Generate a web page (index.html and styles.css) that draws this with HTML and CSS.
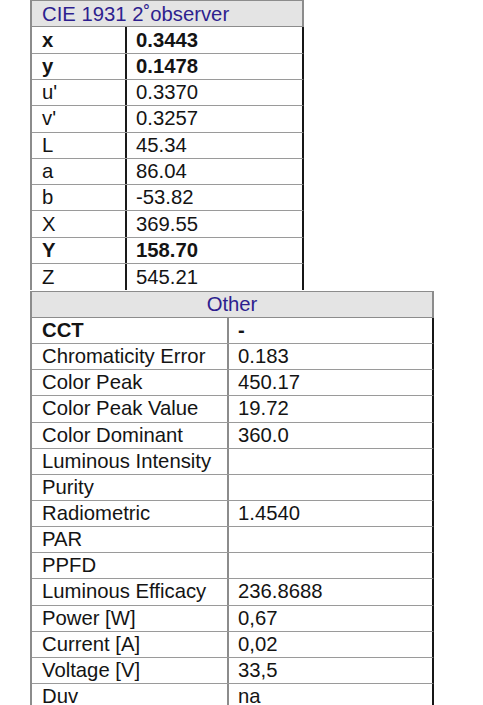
FILE: index.html
```html
<!DOCTYPE html>
<html>
<head>
<meta charset="utf-8">
<link rel="stylesheet" href="styles.css">
</head>
<body>
<div class="page">
  <div class="tbl cie">
    <div class="head left">CIE 1931 2˚observer</div>
    <div class="row"><div class="k b">x</div><div class="v b">0.3443</div></div>
    <div class="row"><div class="k b">y</div><div class="v b">0.1478</div></div>
    <div class="row"><div class="k">u'</div><div class="v">0.3370</div></div>
    <div class="row"><div class="k">v'</div><div class="v">0.3257</div></div>
    <div class="row"><div class="k">L</div><div class="v">45.34</div></div>
    <div class="row"><div class="k">a</div><div class="v">86.04</div></div>
    <div class="row"><div class="k">b</div><div class="v">-53.82</div></div>
    <div class="row"><div class="k">X</div><div class="v">369.55</div></div>
    <div class="row"><div class="k b">Y</div><div class="v b">158.70</div></div>
    <div class="row last"><div class="k">Z</div><div class="v">545.21</div></div>
  </div>
  <div class="tbl other">
    <div class="head center">Other</div>
    <div class="row"><div class="k b">CCT</div><div class="v b">-</div></div>
    <div class="row"><div class="k">Chromaticity Error</div><div class="v">0.183</div></div>
    <div class="row"><div class="k">Color Peak</div><div class="v">450.17</div></div>
    <div class="row"><div class="k">Color Peak Value</div><div class="v">19.72</div></div>
    <div class="row"><div class="k">Color Dominant</div><div class="v">360.0</div></div>
    <div class="row"><div class="k">Luminous Intensity</div><div class="v"></div></div>
    <div class="row"><div class="k">Purity</div><div class="v"></div></div>
    <div class="row"><div class="k">Radiometric</div><div class="v">1.4540</div></div>
    <div class="row"><div class="k">PAR</div><div class="v"></div></div>
    <div class="row"><div class="k">PPFD</div><div class="v"></div></div>
    <div class="row"><div class="k">Luminous Efficacy</div><div class="v">236.8688</div></div>
    <div class="row"><div class="k">Power [W]</div><div class="v">0,67</div></div>
    <div class="row"><div class="k">Current [A]</div><div class="v">0,02</div></div>
    <div class="row"><div class="k">Voltage [V]</div><div class="v">33,5</div></div>
    <div class="row"><div class="k">Duv</div><div class="v">na</div></div>
  </div>
</div>
</body>
</html>
```

FILE: styles.css
```css
html, body {
  margin: 0;
  padding: 0;
  background: #ffffff;
}
body {
  font-family: "Liberation Sans", Arial, sans-serif;
  font-size: 20.3px;
  color: #141414;
  overflow: hidden;
  height: 705px;
}
.page {
  padding-left: 30px;
  display: flex;
  flex-direction: column;
}
.tbl {
  display: flex;
  flex-direction: column;
  border-left: 2px solid #8c8c8c;
}
.cie { width: 272px; }
.other { width: 402px; margin-top: 1px; }
.head {
  height: 25.4px;
  line-height: 26px;
  background: #e4e4e4;
  border-top: 1px solid #8c8c8c;
  border-bottom: 1px solid #8c8c8c;
  border-right: 2px solid #8c8c8c;
  color: #2e1f8f;
  white-space: nowrap;
}
.other .head { height: 24.6px; line-height: 25px; }
.head.left { padding-left: 10px; }
.head.center { text-align: center; }
.row {
  display: grid;
  height: 26.3px;
  box-sizing: border-box;
  border-bottom: 1px solid #9a9a9a;
  border-right: 2px solid #161616;
}
.other .row { height: 26.15px; }
.row.last { border-bottom: none; }
.cie .row { grid-template-columns: 95px 1fr; }
.other .row { grid-template-columns: 197px 1fr; }
.k, .v {
  display: flex;
  align-items: center;
  padding-left: 10px;
  white-space: nowrap;
}
.cie .k { border-right: 2px solid #1a1a1a; }
.other .k { border-right: 2px solid #8c8c8c; }
.v { padding-left: 9px; }
.b { font-weight: bold; }
```
